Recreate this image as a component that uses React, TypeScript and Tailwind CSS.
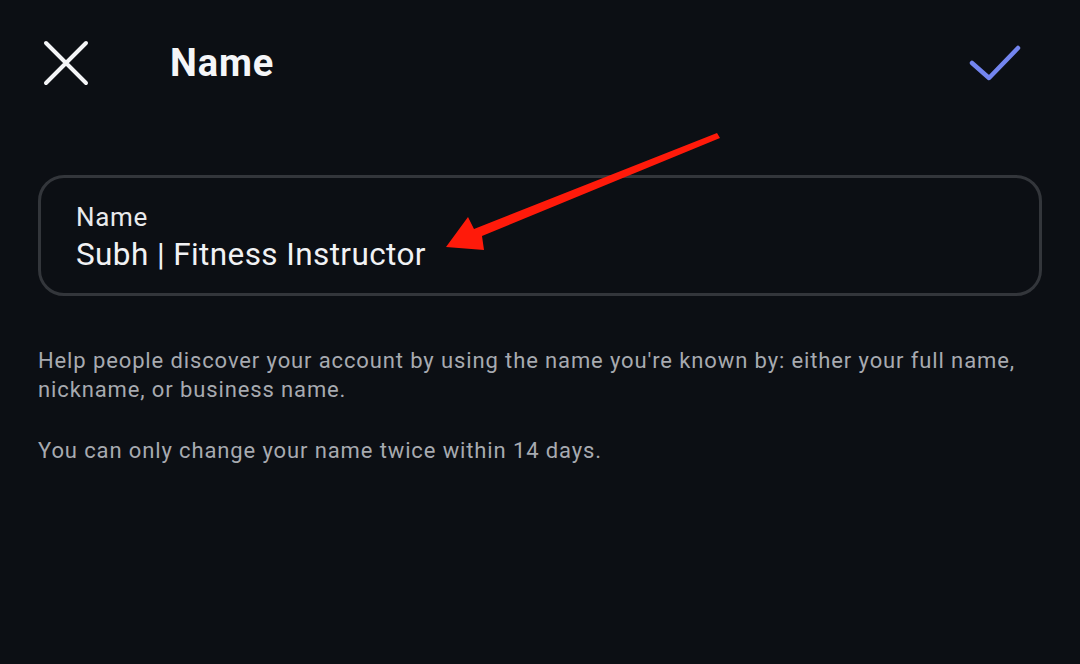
import React from 'react';

/** Red annotation arrow drawn over the field. */
function Arrow() {
  return (
    <svg
      className="pointer-events-none absolute left-0 top-0"
      width="1080"
      height="664"
      viewBox="0 0 1080 664"
    >
      <path
        d="M717 133 L720 138 L482 236 L484 250 L446 247 L468 217 L474 229 Z"
        fill="#ff1a0a"
      />
    </svg>
  );
}

export default function App() {
  return (
    <div
      className="relative h-[664px] w-[1080px] overflow-hidden bg-[#0c0f14] text-white"
      style={{ fontFamily: 'Roboto, "Noto Sans", sans-serif' }}
    >
      <header className="flex h-[128px] items-center pb-[2px] pl-[43px] pr-[58px]">
        <svg width="46" height="46" viewBox="0 0 46 46" className="shrink-0">
          <path
            d="M3 3 L43 43 M43 3 L3 43"
            stroke="#f4f5f7"
            strokeWidth="4"
            strokeLinecap="round"
          />
        </svg>
        <h1 className="ml-[81px] text-[38px] font-bold leading-none tracking-[0.9px] text-[#f5f6f8]">
          Name
        </h1>
        <svg width="54" height="38" viewBox="0 0 54 38" className="ml-auto shrink-0">
          <path
            d="M4 19 L21 34 L50 4"
            fill="none"
            stroke="#7385ef"
            strokeWidth="4.5"
            strokeLinecap="round"
            strokeLinejoin="round"
          />
        </svg>
      </header>

      <main className="px-[38px] pt-[47px]">
        <div className="flex h-[121px] flex-col justify-center rounded-[26px] border-[3px] border-[#33363b] pl-[35px] pt-[4px]">
          <span className="text-[26px] leading-[32px] tracking-[0.7px] text-[#e9eaec]">Name</span>
          <span className="mt-[3px] text-[31.5px] leading-[38px] tracking-[0.4px] text-[#f1f2f4]">
            Subh | Fitness Instructor
          </span>
        </div>

        <div className="text-[22px] leading-[29px] tracking-[0.88px] text-[#a7aab0]">
          <p className="mt-[50px]">
            Help people discover your account by using the name you're known by: either your full name,
            <br />
            nickname, or business name.
          </p>
          <p className="mt-[32px]">You can only change your name twice within 14 days.</p>
        </div>
      </main>

      <Arrow />
    </div>
  );
}
